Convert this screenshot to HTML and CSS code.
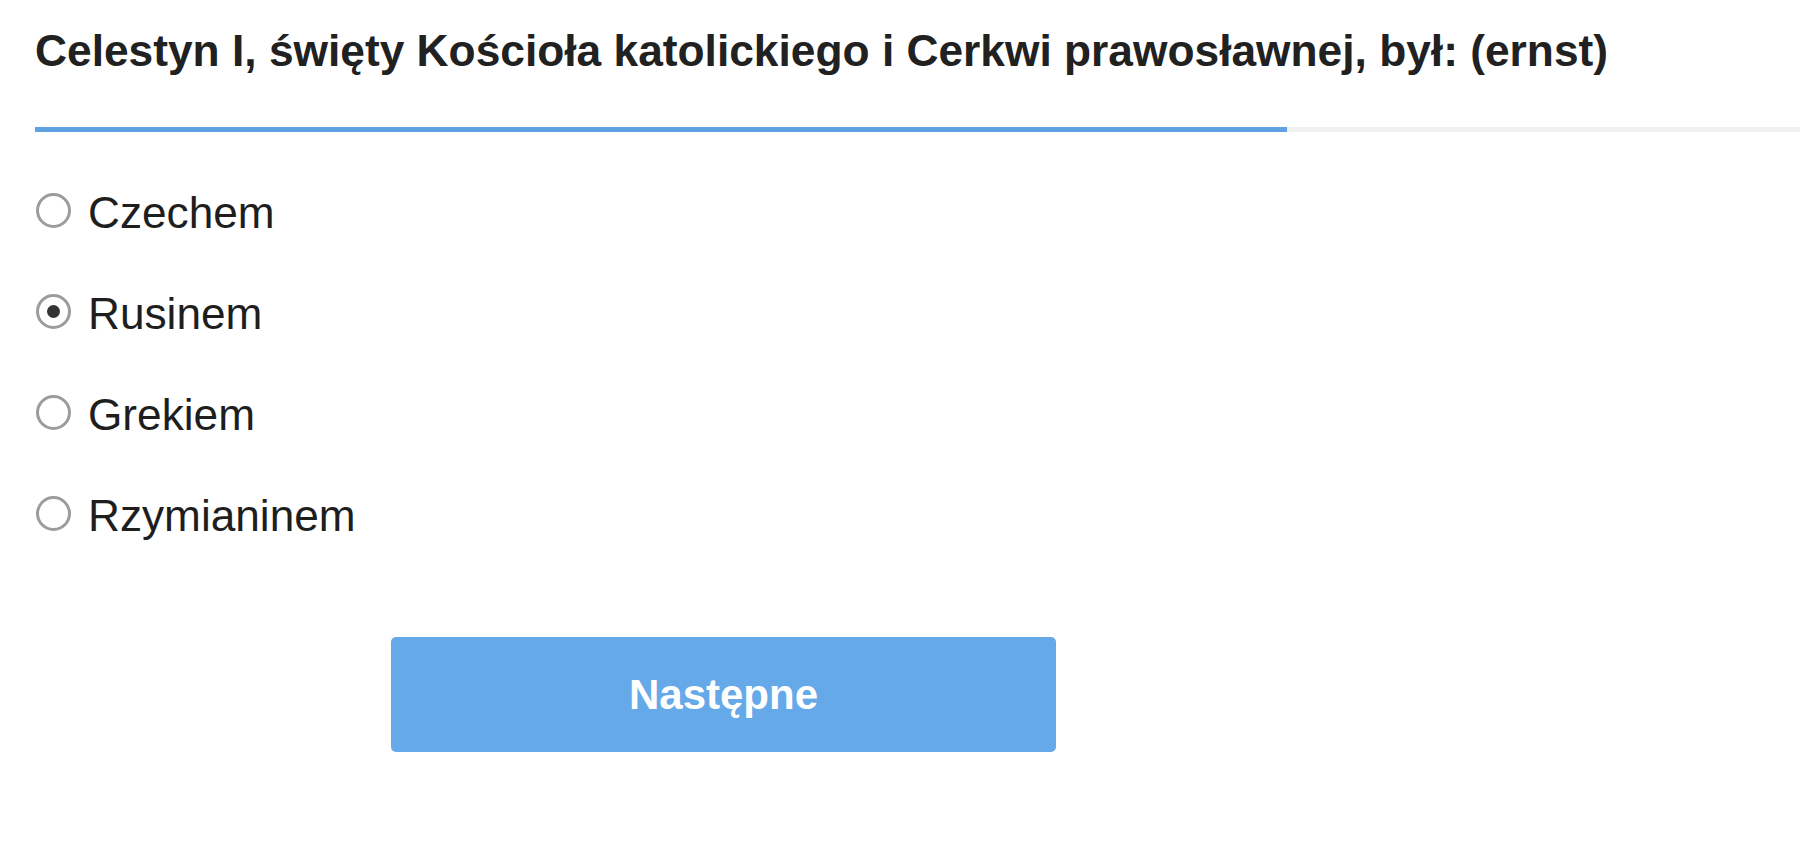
FILE: index.html
```html
<!DOCTYPE html>
<html lang="pl">
<head>
<meta charset="utf-8">
<title>Quiz</title>
<link rel="stylesheet" href="styles.css">
</head>
<body>
<main class="quiz">
  <h1 class="question">Celestyn I, święty Kościoła katolickiego i Cerkwi prawosławnej, był: (ernst)</h1>
  <div class="progress"><div class="progress-fill" style="width: 70.93%"></div></div>
  <ul class="options">
    <li class="option"><span class="radio"></span><span class="label">Czechem</span></li>
    <li class="option"><span class="radio checked"></span><span class="label">Rusinem</span></li>
    <li class="option"><span class="radio"></span><span class="label">Grekiem</span></li>
    <li class="option"><span class="radio"></span><span class="label">Rzymianinem</span></li>
  </ul>
  <button class="next" type="button">Następne</button>
</main>
</body>
</html>
```
FILE: styles.css
```css
html, body {
  margin: 0;
  padding: 0;
  background: #ffffff;
}

body {
  font-family: "Liberation Sans", Arial, sans-serif;
  color: #222222;
  overflow: hidden;
}

.quiz {
  padding: 25px 0 0 35px;
}

.question {
  margin: 0;
  font-size: 44.3px;
  line-height: 51px;
  font-weight: bold;
  color: #212121;
  white-space: nowrap;
}

.progress {
  margin-top: 51px;
  height: 5px;
  background: #f0f0f0;
}

.progress-fill {
  height: 100%;
  background: #5fa1e3;
}

.options {
  list-style: none;
  margin: 28px 0 0 0;
  padding: 0;
}

.option {
  height: 101px;
  display: flex;
  align-items: center;
}

.radio {
  box-sizing: border-box;
  width: 35px;
  height: 35px;
  margin-left: 1px;
  border: 3.5px solid #9c9c9c;
  border-radius: 50%;
  display: flex;
  align-items: center;
  justify-content: center;
  flex: none;
}

.radio.checked::after {
  content: "";
  width: 13px;
  height: 13px;
  border-radius: 50%;
  background: #333333;
}

.label {
  margin-left: 17px;
  padding-top: 5px;
  font-size: 44.2px;
  color: #1e1e1e;
}

.next {
  display: flex;
  align-items: center;
  justify-content: center;
  margin: 73px 0 0 356px;
  width: 665px;
  height: 115px;
  border: none;
  border-radius: 5px;
  background: #65a9e9;
  color: #ffffff;
  font-family: "Liberation Sans", Arial, sans-serif;
  font-weight: bold;
  font-size: 42px;
  padding: 0;
}
```
